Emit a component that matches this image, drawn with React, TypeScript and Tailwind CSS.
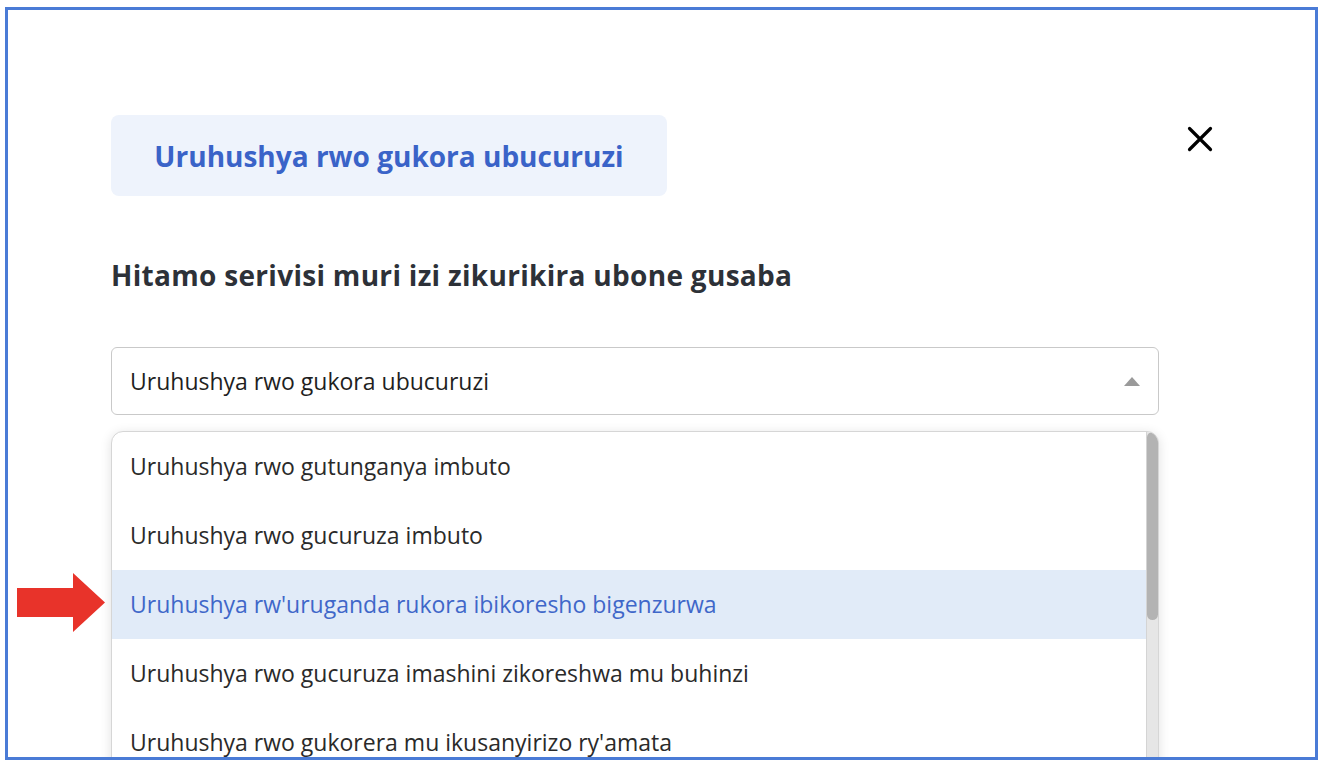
const items = [
	'Uruhushya rwo gutunganya imbuto',
	'Uruhushya rwo gucuruza imbuto',
	"Uruhushya rw'uruganda rukora ibikoresho bigenzurwa",
	'Uruhushya rwo gucuruza imashini zikoreshwa mu buhinzi',
	"Uruhushya rwo gukorera mu ikusanyirizo ry'amata",
];

function RedArrow() {
	return (
		<svg width="88" height="59" viewBox="0 0 88 59" className="absolute left-[9px] top-[563px]">
			<polygon points="0,15 56,15 56,0 88,29.5 56,59 56,44 0,44" fill="#e8332a" />
		</svg>
	);
}

function CloseIcon() {
	return (
		<svg width="26" height="26" viewBox="0 0 26 26" className="mt-[11px] mr-[-1px]">
			<path d="M2.5 2.5L23.5 23.5M23.5 2.5L2.5 23.5" stroke="#000" strokeWidth="3.2" strokeLinecap="round" />
		</svg>
	);
}

export default function App() {
	return (
		<div className="w-[1326px] h-[768px] bg-white pt-[7px] pl-[5px] font-['Open_Sans',sans-serif]">
			<div className="relative w-[1313px] h-[753px] border-[3px] border-[#4a7bd6] overflow-hidden px-[103px] pt-[105px]">
				{/* title + close */}
				<div className="flex items-start justify-between">
					<div className="h-[81px] w-[556px] rounded-lg bg-[#eef3fc] flex items-center justify-center">
						<span className="text-[28px] font-bold text-[#3a63c8] leading-[36px]">Uruhushya rwo gukora ubucuruzi</span>
					</div>
					<CloseIcon />
				</div>

				<h2 className="mt-[62px] text-[28px] font-bold text-[#2d3138] leading-[34px] tracking-[0.3px]">
					Hitamo serivisi muri izi zikurikira ubone gusaba
				</h2>

				{/* select */}
				<div className="mt-[55px] w-[1048px] h-[68px] rounded-md border border-[#c9c9c9] flex items-center justify-between pl-[18px] pr-[18px]">
					<span className="text-[23px] text-[#1f1f1f]">Uruhushya rwo gukora ubucuruzi</span>
					<svg width="16" height="9" viewBox="0 0 16 9">
						<polygon points="0,9 8,0 16,9" fill="#9a9a9a" />
					</svg>
				</div>

				{/* options list */}
				<div className="mt-[16px] w-[1048px] h-[400px] rounded-t-xl border border-[#d6d6d6] bg-white shadow-[0_2px_12px_rgba(0,0,0,0.12)] flex overflow-hidden">
					<div className="flex-1">
						{items.map((t, i) => (
							<div
								key={t}
								className={
									i === 2
										? 'h-[69px] flex items-center pl-[18px] bg-[#e1ebf8] text-[23px] text-[#3f67c9]'
										: 'h-[69px] flex items-center pl-[18px] text-[23px] text-[#2a2a2a]'
								}
							>
								{t}
							</div>
						))}
					</div>
					<div className="w-[12px] bg-[#e6e6e6] border-l border-[#d4d4d4]">
						<div className="h-[188px] w-full rounded-full bg-[#b3b3b3]" />
					</div>
				</div>

				<RedArrow />
			</div>
		</div>
	);
}
